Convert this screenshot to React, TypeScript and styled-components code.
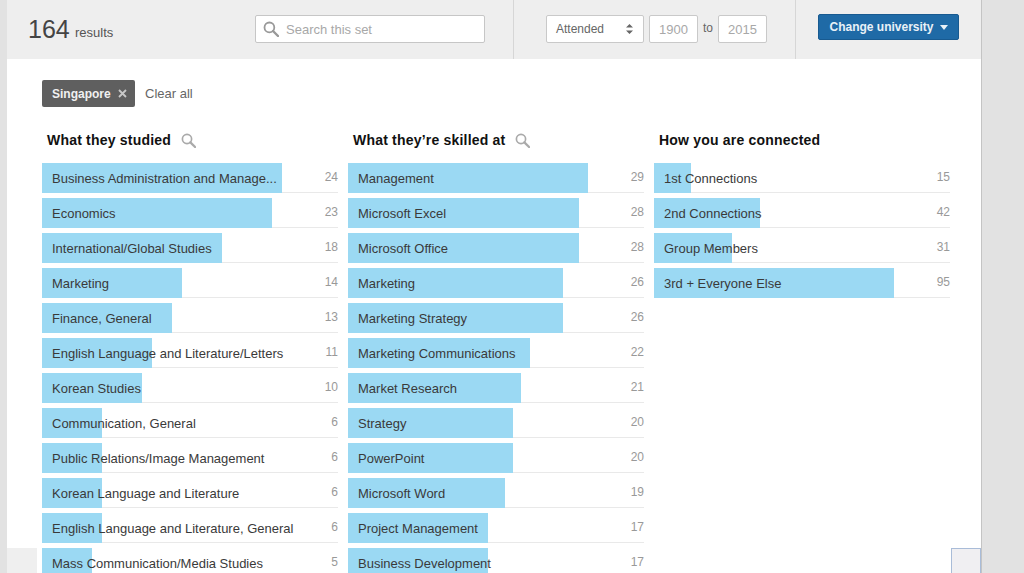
import React from 'react'
import styled, { createGlobalStyle } from 'styled-components'

const GlobalStyle = createGlobalStyle`
  html, body {
    margin: 0;
    height: 573px;
    overflow: hidden;
    background: #e2e2e2;
    font-family: Arial, "Liberation Sans", sans-serif;
  }
`

const Page = styled.div`
  position: relative;
  width: 974px;
  height: 573px;
  margin-left: 7px;
  background: #fff;
  border-right: 1px solid #c4c4c4;
  overflow: hidden;
`

const Header = styled.div`
  display: flex;
  height: 59px;
  background: #eeeeee;
`

const ResultsCell = styled.div`
  display: flex;
  align-items: flex-start;
  width: 507px;
  flex: none;
  padding: 14px 0 0 21px;
  box-sizing: border-box;
  border-right: 1px solid #d6d6d6;
`

const Count = styled.span`
  font-size: 25px;
  line-height: 30px;
  color: #444;
  width: 47px;
`

const CountLabel = styled.span`
  font-size: 13px;
  line-height: 16px;
  margin-top: 11px;
  color: #555;
  width: 180px;
`

const SearchBox = styled.div`
  display: flex;
  align-items: center;
  gap: 7px;
  width: 230px;
  height: 28px;
  margin-top: 1px;
  padding-left: 7px;
  box-sizing: border-box;
  background: #fff;
  border: 1px solid #c6c6c6;
  border-radius: 2px;
  font-size: 13px;
  color: #a8a8a8;
`

const FilterCell = styled.div`
  display: flex;
  align-items: flex-start;
  width: 282px;
  flex: none;
  padding: 15px 0 0 32px;
  box-sizing: border-box;
  border-right: 1px solid #d6d6d6;
`

const Select = styled.div`
  display: flex;
  align-items: center;
  justify-content: space-between;
  width: 98px;
  height: 28px;
  padding: 0 10px 0 9px;
  margin-right: 5px;
  box-sizing: border-box;
  background: #fff;
  border: 1px solid #c9c9c9;
  border-radius: 2px;
  font-size: 12px;
  color: #666;
`

const YearBox = styled.div`
  display: flex;
  align-items: center;
  justify-content: center;
  width: 49px;
  height: 28px;
  box-sizing: border-box;
  background: #fff;
  border: 1px solid #c9c9c9;
  border-radius: 2px;
  font-size: 13px;
  color: #a8a8a8;
`

const To = styled.span`
  width: 20px;
  text-align: center;
  font-size: 12px;
  line-height: 26px;
  color: #666;
`

const ActionCell = styled.div`
  padding: 14px 0 0 22px;
`

const PrimaryButton = styled.div`
  display: flex;
  align-items: center;
  justify-content: center;
  gap: 6px;
  width: 141px;
  height: 26px;
  box-sizing: border-box;
  padding-bottom: 1px;
  background: #1f6aa6;
  border: 1px solid #185a90;
  border-radius: 2px;
  font-size: 12px;
  font-weight: bold;
  color: #e9f1f7;
`

const Caret = styled.span`
  width: 0;
  height: 0;
  margin-top: 2px;
  border-left: 4.5px solid transparent;
  border-right: 4.5px solid transparent;
  border-top: 5px solid #e9f1f7;
`

const Body = styled.div`
  padding: 21px 0 0 35px;
`

const Pills = styled.div`
  display: flex;
  align-items: center;
  gap: 10px;
  height: 27px;
`

const Pill = styled.div`
  display: flex;
  align-items: center;
  gap: 7px;
  width: 93px;
  height: 27px;
  padding-left: 10px;
  box-sizing: border-box;
  background: #5f5f5f;
  border-radius: 2px;
  font-size: 12px;
  font-weight: bold;
  color: #f0f0f0;
`

const PillClose = styled.svg`
  width: 9px;
  height: 9px;
  flex: none;
`

const ClearAll = styled.span`
  font-size: 13px;
  color: #666;
`

const Columns = styled.div`
  display: flex;
  gap: 10px;
  margin-top: 23px;
`

const Column = styled.div`
  width: 296px;
  flex: none;
`

const ColumnTitle = styled.div`
  display: flex;
  align-items: center;
  gap: 10px;
  height: 20px;
  margin-bottom: 13px;
  padding-left: 5px;
  font-size: 14px;
  font-weight: bold;
  letter-spacing: 0.2px;
  color: #111;
`

const Row = styled.div`
  position: relative;
  display: flex;
  align-items: center;
  justify-content: space-between;
  height: 30px;
  margin-bottom: 5px;
  padding: 0 0 0 10px;
  box-sizing: border-box;
  font-size: 13px;
  color: #3a3a3a;

  &::before {
    content: '';
    position: absolute;
    left: 0;
    right: 0;
    bottom: 0;
    height: 1px;
    background: #e9e9e9;
  }
`

const Bar = styled.div`
  position: absolute;
  left: 0;
  top: 0;
  bottom: 0;
  background: #9bd9f3;
`

const RowLabel = styled.span`
  position: relative;
  white-space: nowrap;
`

const RowCount = styled.span`
  position: relative;
  margin-top: -2px;
  font-size: 12px;
  color: #999;
`

const CornerLeft = styled.div`
  position: absolute;
  left: 0;
  bottom: 0;
  width: 30px;
  height: 25px;
  background: #efefef;
`

const CornerRight = styled.div`
  position: absolute;
  right: 0;
  bottom: -2px;
  width: 30px;
  height: 27px;
  box-sizing: border-box;
  background: #f0eff2;
  border: 1px solid #a9bcd8;
`

type Item = [string, number]

const studied: Item[] = [
  ['Business Administration and Manage...', 24],
  ['Economics', 23],
  ['International/Global Studies', 18],
  ['Marketing', 14],
  ['Finance, General', 13],
  ['English Language and Literature/Letters', 11],
  ['Korean Studies', 10],
  ['Communication, General', 6],
  ['Public Relations/Image Management', 6],
  ['Korean Language and Literature', 6],
  ['English Language and Literature, General', 6],
  ['Mass Communication/Media Studies', 5],
]

const skilled: Item[] = [
  ['Management', 29],
  ['Microsoft Excel', 28],
  ['Microsoft Office', 28],
  ['Marketing', 26],
  ['Marketing Strategy', 26],
  ['Marketing Communications', 22],
  ['Market Research', 21],
  ['Strategy', 20],
  ['PowerPoint', 20],
  ['Microsoft Word', 19],
  ['Project Management', 17],
  ['Business Development', 17],
]

const connected: Item[] = [
  ['1st Connections', 15],
  ['2nd Connections', 42],
  ['Group Members', 31],
  ['3rd + Everyone Else', 95],
]

const MagnifierIcon = ({ size, color }: { size: number; color: string }) => (
  <svg width={size} height={size} viewBox="0 0 16 16" fill="none" stroke={color}>
    <circle cx="6.4" cy="6.4" r="4.9" strokeWidth="1.8" />
    <path d="M10 10l5 5" strokeWidth="2.4" strokeLinecap="round" />
  </svg>
)

const SortIcon = () => (
  <svg width="7" height="12" viewBox="0 0 7 12" fill="#666">
    <path d="M3.5 1L7 4.5H0zM3.5 11L0 7.5h7z" />
  </svg>
)

const ChartColumn = ({ title, items, searchable }: { title: string; items: Item[]; searchable?: boolean }) => {
  const max = Math.max(...items.map(([, n]) => n))
  return (
    <Column>
      <ColumnTitle>
        {title}
        {searchable && <MagnifierIcon size={15} color="#aaa" />}
      </ColumnTitle>
      {items.map(([label, n]) => (
        <Row key={label}>
          <Bar style={{ width: Math.floor((n / max) * 240) }} />
          <RowLabel>{label}</RowLabel>
          <RowCount>{n}</RowCount>
        </Row>
      ))}
    </Column>
  )
}

const App = () => (
  <>
    <GlobalStyle />
    <Page>
      <Header>
        <ResultsCell>
          <Count>164</Count>
          <CountLabel>results</CountLabel>
          <SearchBox>
            <MagnifierIcon size={16} color="#999" />
            Search this set
          </SearchBox>
        </ResultsCell>
        <FilterCell>
          <Select>
            Attended
            <SortIcon />
          </Select>
          <YearBox>1900</YearBox>
          <To>to</To>
          <YearBox>2015</YearBox>
        </FilterCell>
        <ActionCell>
          <PrimaryButton>
            Change university
            <Caret />
          </PrimaryButton>
        </ActionCell>
      </Header>
      <Body>
        <Pills>
          <Pill>
            Singapore
            <PillClose viewBox="0 0 9 9" stroke="#c8c8c8" strokeWidth="1.8">
              <path d="M1 1l7 7M8 1l-7 7" />
            </PillClose>
          </Pill>
          <ClearAll>Clear all</ClearAll>
        </Pills>
        <Columns>
          <ChartColumn title="What they studied" items={studied} searchable />
          <ChartColumn title="What they’re skilled at" items={skilled} searchable />
          <ChartColumn title="How you are connected" items={connected} />
        </Columns>
      </Body>
      <CornerLeft />
      <CornerRight />
    </Page>
  </>
)

export default App
